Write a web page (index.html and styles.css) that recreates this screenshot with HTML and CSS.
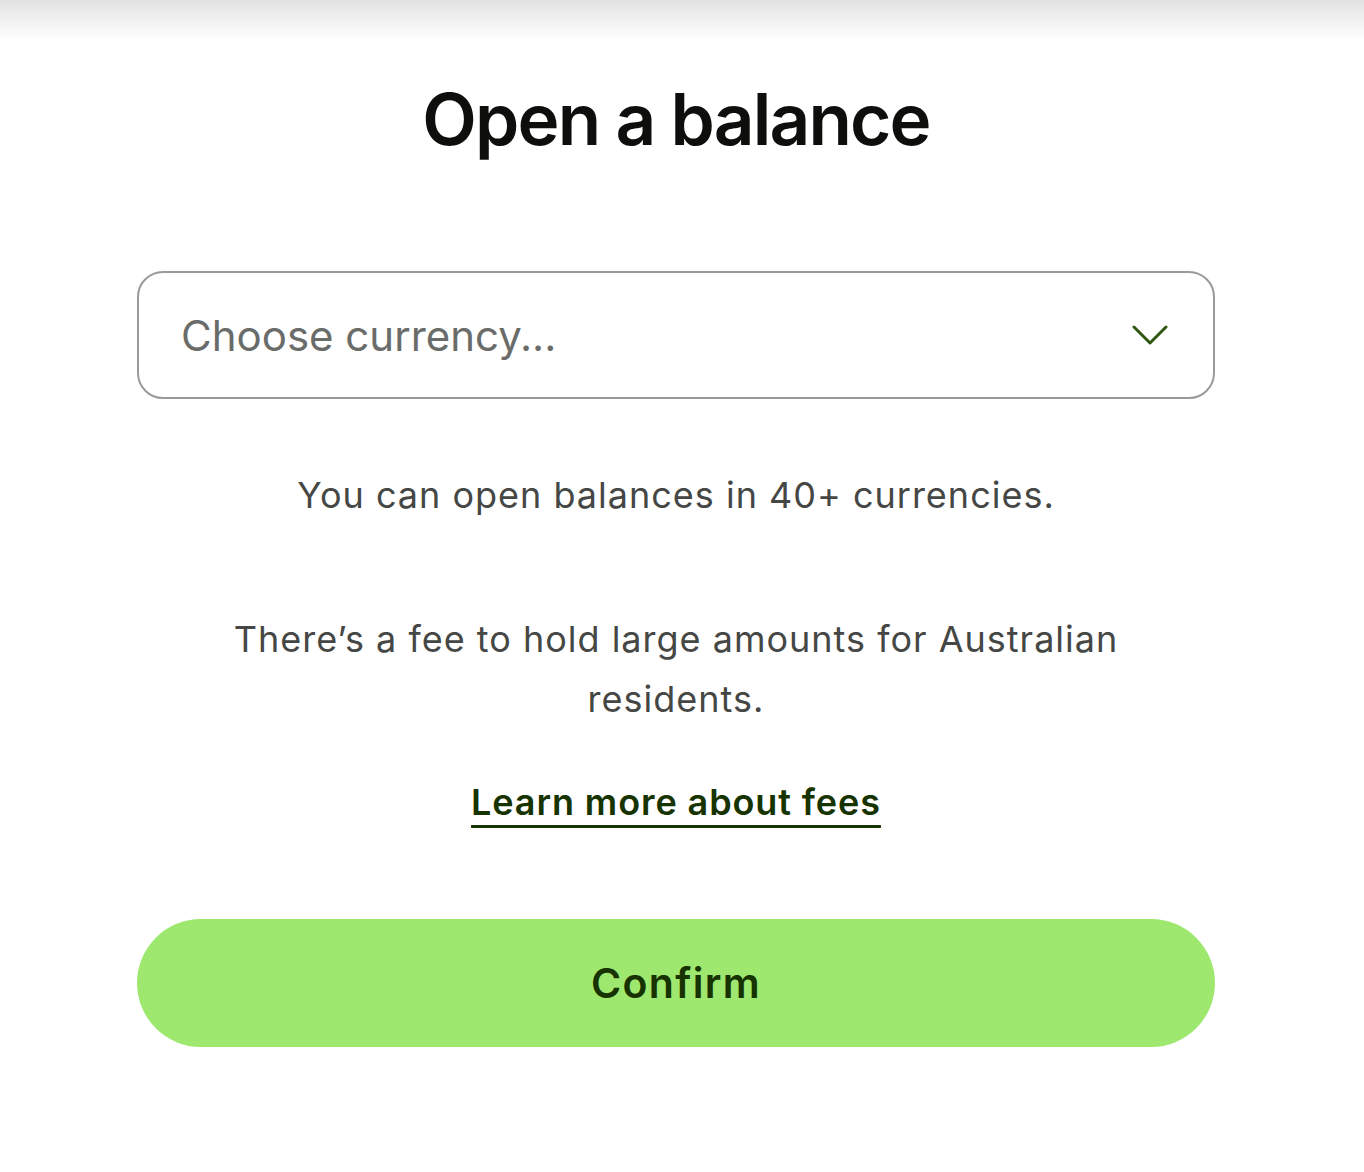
FILE: index.html
```html
<!DOCTYPE html>
<html lang="en">
<head>
  <meta charset="UTF-8" />
  <meta name="viewport" content="width=device-width, initial-scale=1" />
  <title>Open a balance</title>
  <link rel="stylesheet" href="styles.css">
</head>
<body>
  <div class="topshade"></div>
  <main class="panel">
    <h1 class="title">Open a balance</h1>

    <button class="select" type="button">
      <span class="placeholder">Choose currency...</span>
      <svg class="chevron" width="36" height="22" viewBox="0 0 36 22" aria-hidden="true">
        <path d="M2 3 L18 19 L34 3" fill="none" stroke="#2f5711" stroke-width="3" stroke-linecap="round" stroke-linejoin="round"/>
      </svg>
    </button>

    <p class="note first">You can open balances in 40+ currencies.</p>
    <p class="note">There’s a fee to hold large amounts for Australian residents.</p>

    <a class="learn" href="#">Learn more about fees</a>

    <button class="confirm" type="button">Confirm</button>
  </main>
</body>
</html>
```

FILE: styles.css
```css
body {
  margin: 0;
  background: #fff;
  font-family: Inter, "Noto Sans", sans-serif;
}
.topshade {
  height: 40px;
  background: linear-gradient(#e2e2e2, #ffffff);
}
.panel {
  width: 1078px;
  margin-left: 137px;
  display: flex;
  flex-direction: column;
  align-items: center;
}
.title {
  margin: 37px 0 0;
  font-size: 71px;
  font-weight: 600;
  letter-spacing: -1.8px;
  line-height: 1.2;
  color: #0e0f0c;
}
.select {
  margin-top: 109px;
  width: 100%;
  height: 128px;
  box-sizing: border-box;
  border: 2px solid #9a9a9a;
  border-radius: 26px;
  background: #fff;
  padding: 0 45px 0 42px;
  display: flex;
  align-items: center;
  justify-content: space-between;
  font-family: inherit;
  cursor: pointer;
}
.placeholder {
  font-size: 42px;
  letter-spacing: 0;
  color: #6a6c6a;
}
.note {
  margin: 0;
  width: 920px;
  text-align: center;
  font-size: 36px;
  letter-spacing: 1px;
  line-height: 60px;
  color: #454745;
}
.first {
  margin-top: 66px;
  margin-bottom: 84px;
}
.learn {
  margin-top: 51px;
  font-size: 36px;
  font-weight: 600;
  letter-spacing: 0.9px;
  color: #163300;
  text-decoration: underline;
  text-decoration-thickness: 3px;
  text-underline-offset: 10px;
}
.confirm {
  margin-top: 95px;
  width: 100%;
  height: 128px;
  border: 0;
  border-radius: 64px;
  background: #9fe870;
  color: #163300;
  font-family: inherit;
  font-size: 41px;
  font-weight: 600;
  letter-spacing: 1.3px;
  cursor: pointer;
}
```
